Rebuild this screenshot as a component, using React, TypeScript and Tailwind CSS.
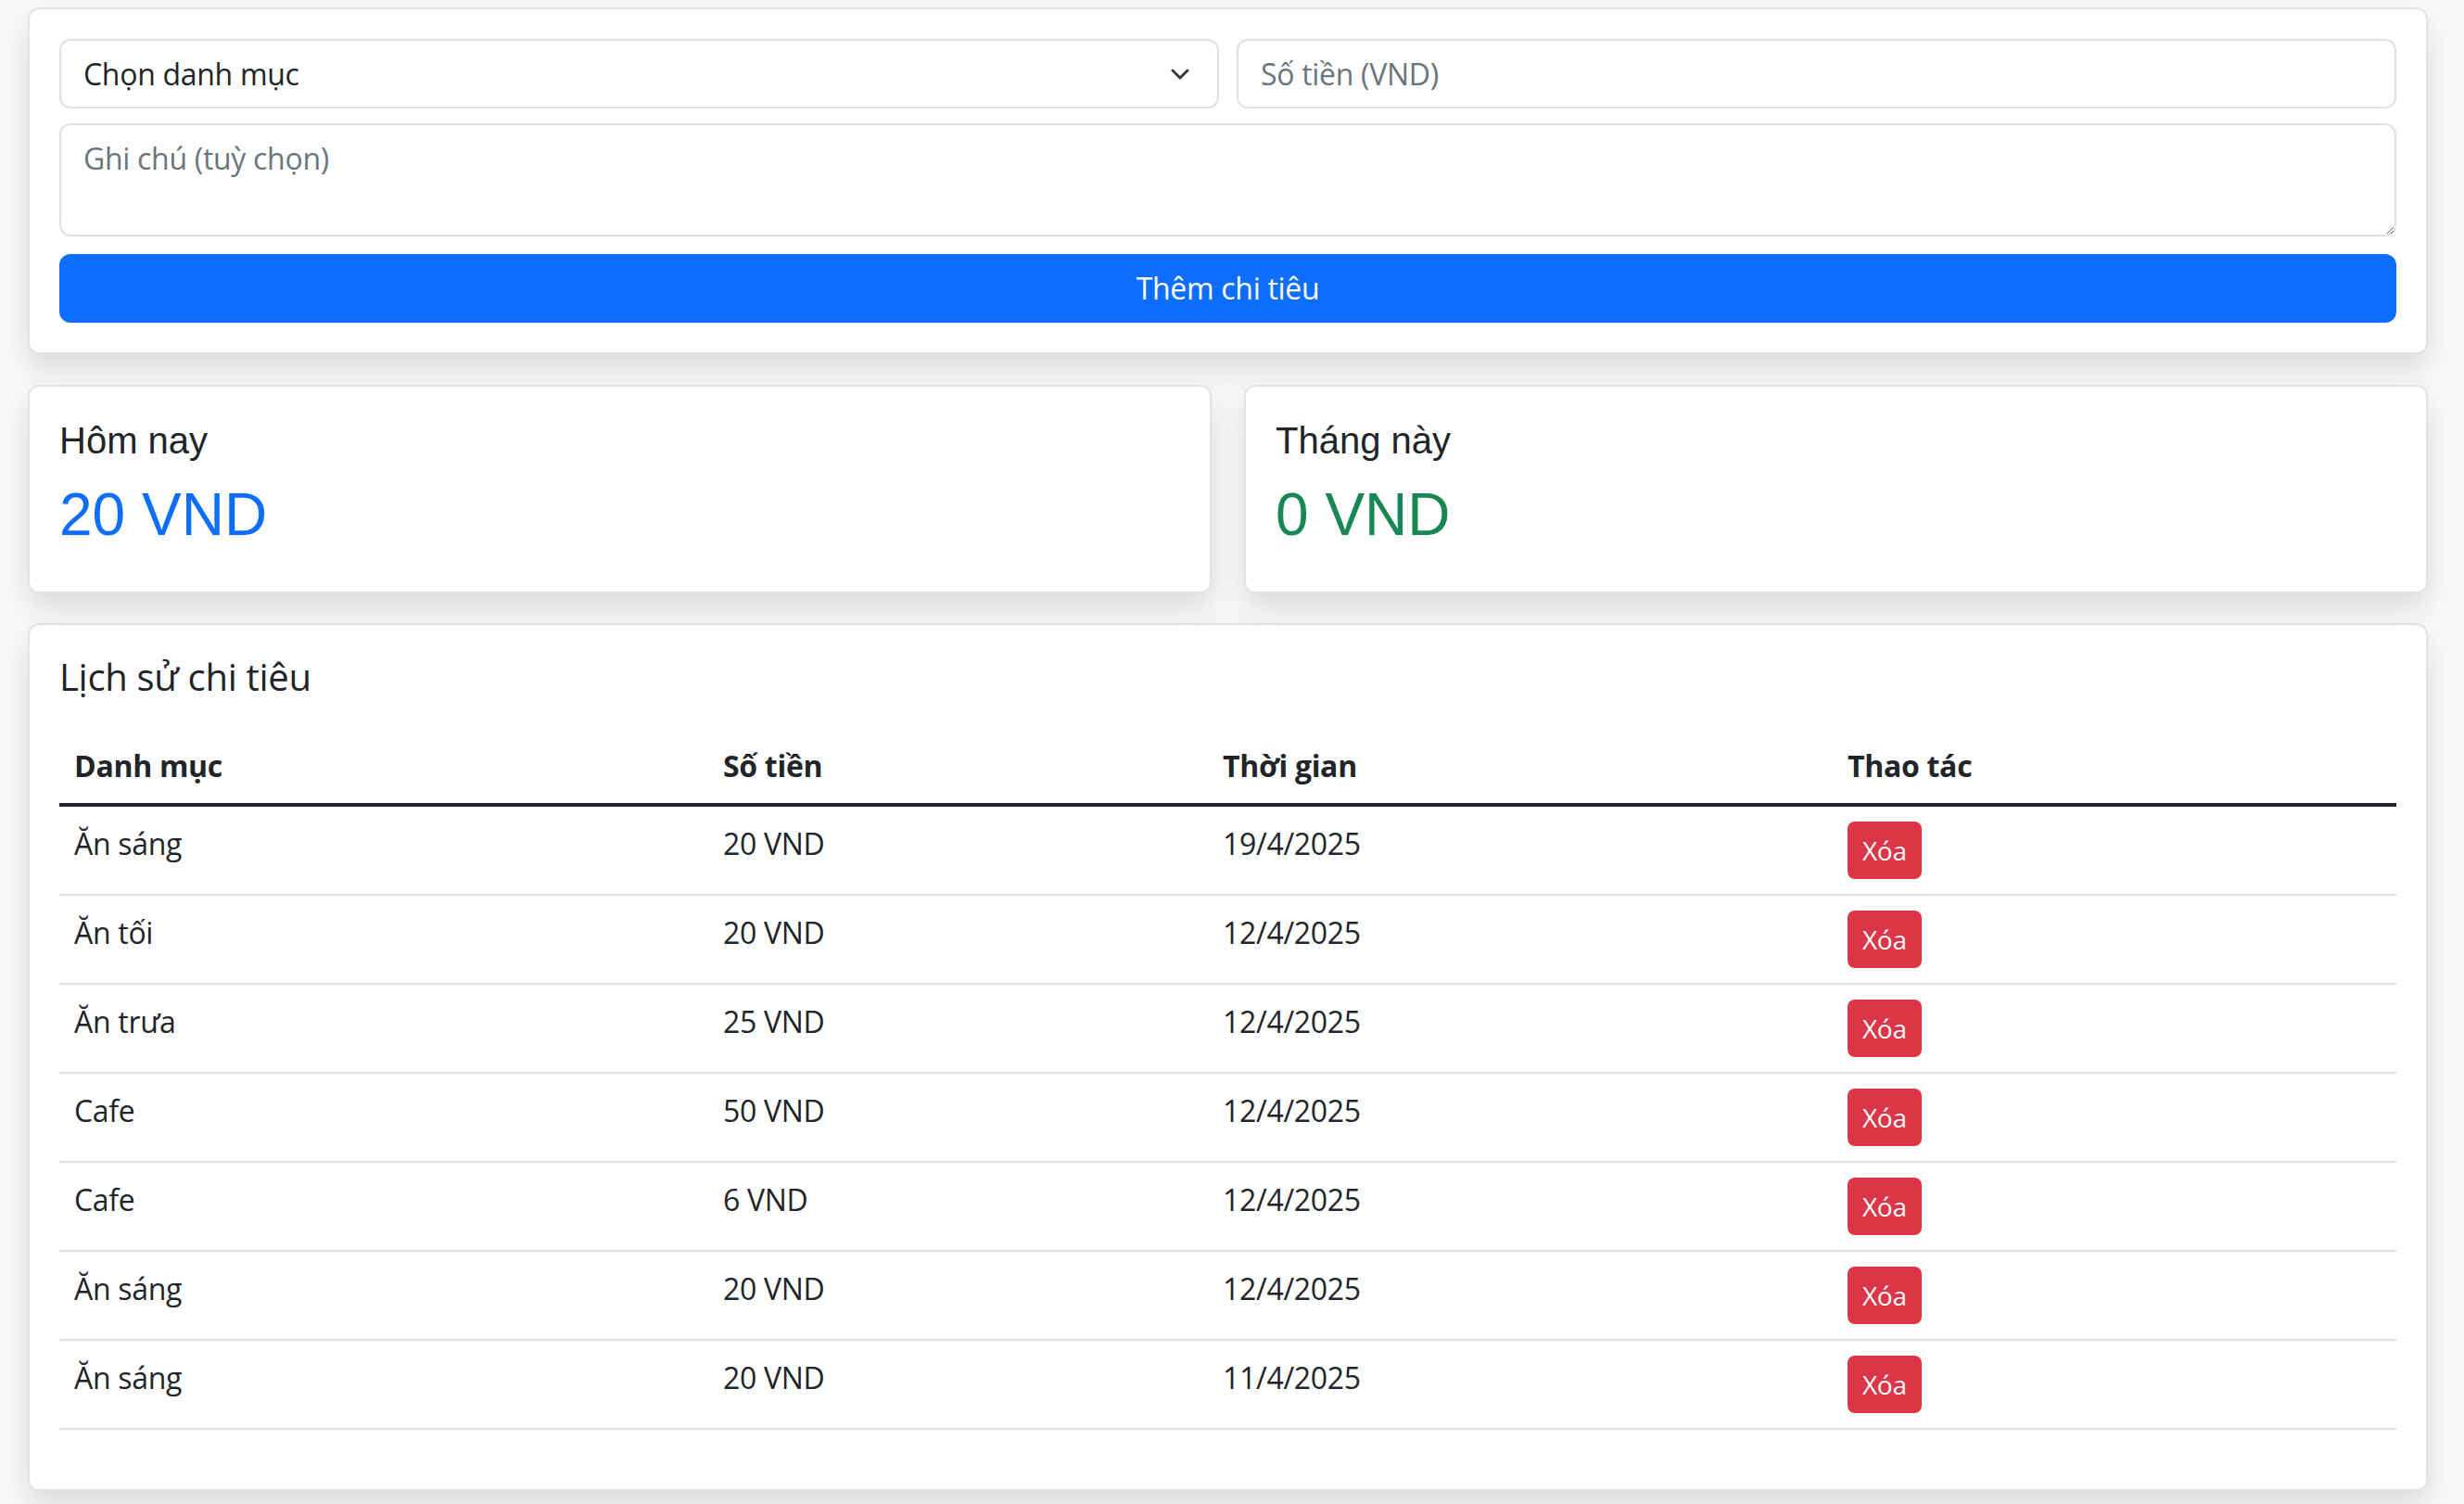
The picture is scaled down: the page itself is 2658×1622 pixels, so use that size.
import { ChevronDown } from "lucide-react";

const EXPENSES = [
    { category: "Ăn sáng", amount: "20 VND", date: "19/4/2025" },
    { category: "Ăn tối", amount: "20 VND", date: "12/4/2025" },
    { category: "Ăn trưa", amount: "25 VND", date: "12/4/2025" },
    { category: "Cafe", amount: "50 VND", date: "12/4/2025" },
    { category: "Cafe", amount: "6 VND", date: "12/4/2025" },
    { category: "Ăn sáng", amount: "20 VND", date: "12/4/2025" },
    { category: "Ăn sáng", amount: "20 VND", date: "11/4/2025" },
];

const CARD =
    "rounded-[12px] border-2 border-[#e3e4e6] bg-white p-[32px] shadow-[0_16px_32px_rgba(0,0,0,0.12)]";

function StatCard({ label, value, color }: { label: string; value: string; color: string }) {
    return (
        <div className={`${CARD} font-['Liberation_Sans',Arial,sans-serif] tracking-normal`}>
            <div className="mt-[2px] text-[40px] leading-[48px]">{label}</div>
            <div className={`mt-[18px] mb-[12px] text-[64px] leading-[77px] ${color}`}>{value}</div>
        </div>
    );
}

export default function App() {
    return (
        <div className="min-h-screen bg-[#f8f9fa] pl-[30px] pr-[39px] pt-[8px] pb-[40px] font-['Open_Sans',sans-serif] text-[32px] leading-[48px] tracking-[-0.3px] text-[#212529]">
            {/* Add form */}
            <div className={CARD}>
                <div className="grid grid-cols-2 gap-[19px]">
                    <div className="flex h-[75px] items-center justify-between rounded-[12px] border-2 border-[#dee2e6] bg-white pl-[24px] pr-[24px]">
                        <span>Chọn danh mục</span>
                        <ChevronDown className="h-[32px] w-[32px] text-[#343a40]" strokeWidth={2.2} />
                    </div>
                    <input
                        className="h-[75px] rounded-[12px] border-2 border-[#dee2e6] bg-white px-[24px] outline-none placeholder:text-[#6c757d]"
                        placeholder="Số tiền (VND)"
                    />
                </div>
                <textarea
                    className="mt-[16px] block h-[122px] w-full rounded-[12px] border-2 border-[#dee2e6] bg-white px-[24px] py-[12px] outline-none placeholder:text-[#6c757d]"
                    placeholder="Ghi chú (tuỳ chọn)"
                />
                <button className="mt-[19px] block h-[74px] w-full rounded-[12px] bg-[#0d6efd] text-white">
                    Thêm chi tiêu
                </button>
            </div>

            {/* Totals */}
            <div className="mt-[33px] grid grid-cols-2 gap-[35px]">
                <StatCard label="Hôm nay" value="20 VND" color="text-[#0d6efd]" />
                <StatCard label="Tháng này" value="0 VND" color="text-[#198754]" />
            </div>

            {/* History */}
            <div className={`mt-[32px] ${CARD}`}>
                <div className="mb-[32px] text-[40px] leading-[48px]">Lịch sử chi tiêu</div>
                <table className="mb-[32px] w-full border-collapse text-left">
                    <thead>
                        <tr className="border-b-4 border-[#212529]">
                            <th className="w-[700px] p-[16px] font-bold">Danh mục</th>
                            <th className="w-[539px] p-[16px] font-bold">Số tiền</th>
                            <th className="w-[674px] p-[16px] font-bold">Thời gian</th>
                            <th className="p-[16px] font-bold">Thao tác</th>
                        </tr>
                    </thead>
                    <tbody>
                        {EXPENSES.map((row, i) => (
                            <tr key={i} className="border-b-2 border-[#dee2e6] align-top">
                                <td className="p-[16px]">{row.category}</td>
                                <td className="p-[16px]">{row.amount}</td>
                                <td className="p-[16px]">{row.date}</td>
                                <td className="p-[16px]">
                                    <button className="h-[62px] rounded-[8px] bg-[#dc3545] px-[16px] text-[28px] leading-[42px] text-white">
                                        Xóa
                                    </button>
                                </td>
                            </tr>
                        ))}
                    </tbody>
                </table>
            </div>
        </div>
    );
}
